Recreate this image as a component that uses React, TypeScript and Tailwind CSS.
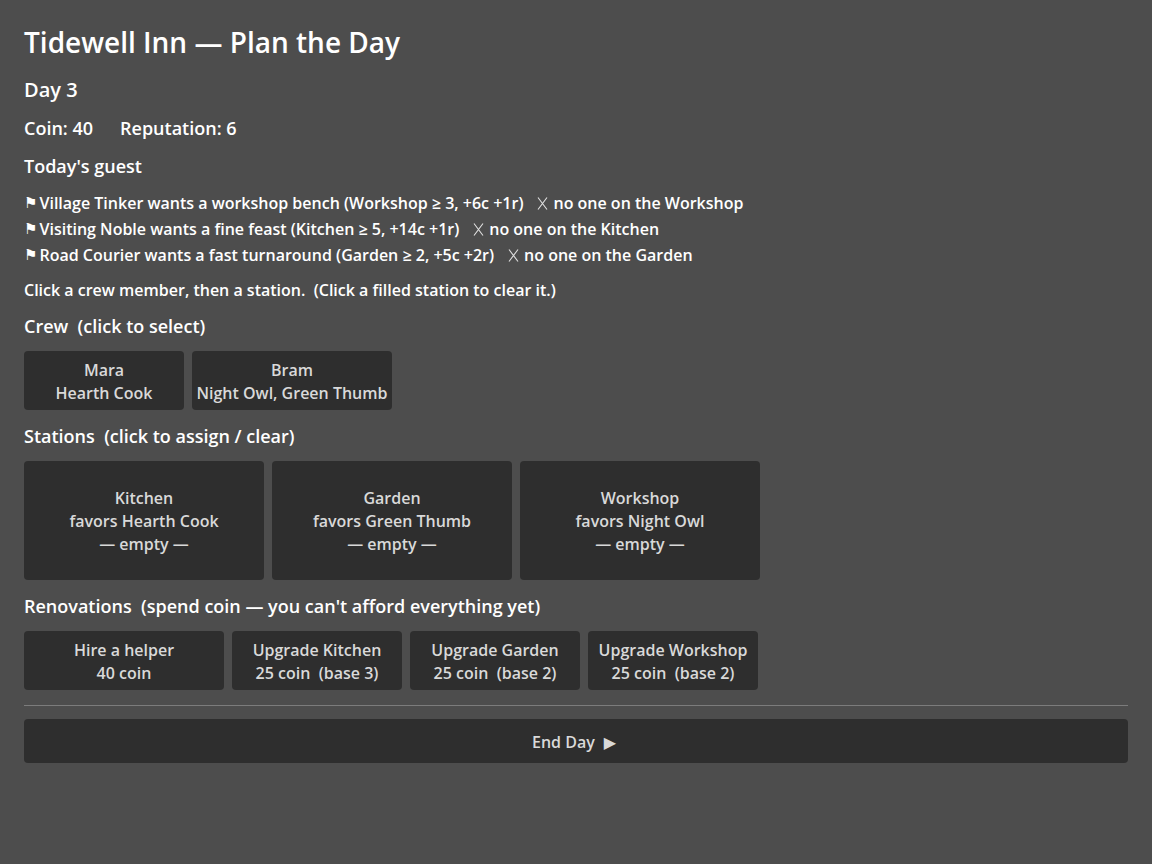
import React from "react";

const guests = [
  { who: "Village Tinker wants a workshop bench (Workshop ≥ 3, +6c +1r)", note: "no one on the Workshop" },
  { who: "Visiting Noble wants a fine feast (Kitchen ≥ 5, +14c +1r)", note: "no one on the Kitchen" },
  { who: "Road Courier wants a fast turnaround (Garden ≥ 2, +5c +2r)", note: "no one on the Garden" },
];

const crew = [
  { name: "Mara", trait: "Hearth Cook", w: "w-[160px]" },
  { name: "Bram", trait: "Night Owl, Green Thumb", w: "w-[200px]" },
];

const stations = [
  { name: "Kitchen", favors: "Hearth Cook" },
  { name: "Garden", favors: "Green Thumb" },
  { name: "Workshop", favors: "Night Owl" },
];

const renos = [
  { title: "Hire a helper", cost: "40 coin", w: "w-[200px]" },
  { title: "Upgrade Kitchen", cost: "25 coin\u00a0\u00a0(base 3)", w: "w-[170px]" },
  { title: "Upgrade Garden", cost: "25 coin\u00a0\u00a0(base 2)", w: "w-[170px]" },
  { title: "Upgrade Workshop", cost: "25 coin\u00a0\u00a0(base 2)", w: "w-[170px]" },
];

const btn = "rounded-[4px] bg-[#2e2e2e] text-[#d9d9d9] text-[16px] leading-[23px] font-semibold flex flex-col items-center justify-center pt-[2px]";

// thin cross used for failed guest requests
const Cross = () => (
  <svg width="11" height="13" viewBox="0 0 11 13" className="ml-[14px] mr-[5px] mt-[1px]">
    <path d="M1 0.5 L10 12.5 M10 0.5 L1 12.5" stroke="#e0e0e0" strokeWidth="1.1" fill="none" />
  </svg>
);

export default function App() {
  return (
    <div className="min-h-[864px] bg-[#4d4d4d] text-white font-['Open_Sans',sans-serif] font-semibold px-6 pt-6 pb-6">
      <h1 className="text-[28px] leading-[36px]">Tidewell Inn — Plan the Day</h1>
      <div className="mt-[16px] text-[20px] leading-[28px]">Day 3</div>
      <div className="mt-[11px] text-[18px] leading-[26px] flex gap-[27px]">
        <span>Coin: 40</span>
        <span>Reputation: 6</span>
      </div>
      <div className="mt-[12px] text-[18px] leading-[26px]">Today's guest</div>

      <ul className="mt-[11px] text-[16px] leading-[26px]">
        {guests.map((g) => (
          <li key={g.who} className="flex items-center whitespace-pre">
            <span className="text-[15px] font-['DejaVu_Sans'] mr-[2px] -mt-[1px]">⚑</span>
            <span>{g.who}</span>
            <Cross />
            <span>{g.note}</span>
          </li>
        ))}
      </ul>

      <p className="mt-[9px] text-[16px] leading-[26px] whitespace-pre">
        Click a crew member, then a station.  (Click a filled station to clear it.)
      </p>

      <h2 className="mt-[10px] text-[18px] leading-[26px] whitespace-pre">Crew  (click to select)</h2>
      <div className="mt-[12px] flex gap-2">
        {crew.map((c) => (
          <button key={c.name} className={`${btn} ${c.w} h-[59px]`}>
            <span>{c.name}</span>
            <span>{c.trait}</span>
          </button>
        ))}
      </div>

      <h2 className="mt-[13px] text-[18px] leading-[26px] whitespace-pre">Stations  (click to assign / clear)</h2>
      <div className="mt-[12px] flex gap-2">
        {stations.map((s) => (
          <button key={s.name} className={`${btn} w-[240px] h-[119px]`}>
            <span>{s.name}</span>
            <span>favors {s.favors}</span>
            <span>— empty —</span>
          </button>
        ))}
      </div>

      <h2 className="mt-[13px] text-[18px] leading-[26px] whitespace-pre">
        Renovations  (spend coin — you can't afford everything yet)
      </h2>
      <div className="mt-[12px] flex gap-2">
        {renos.map((r) => (
          <button key={r.title} className={`${btn} ${r.w} h-[59px]`}>
            <span>{r.title}</span>
            <span className="whitespace-pre">{r.cost}</span>
          </button>
        ))}
      </div>

      <hr className="mt-[15px] border-0 border-t border-[#7c7c7c]" />

      <button className={`${btn} mt-[13px] w-full h-[44px] flex-row gap-[9px]`}>
        <span className="ml-[-4px]">End Day</span>
        <span className="text-[16px] font-['DejaVu_Sans']">▶</span>
      </button>
    </div>
  );
}
